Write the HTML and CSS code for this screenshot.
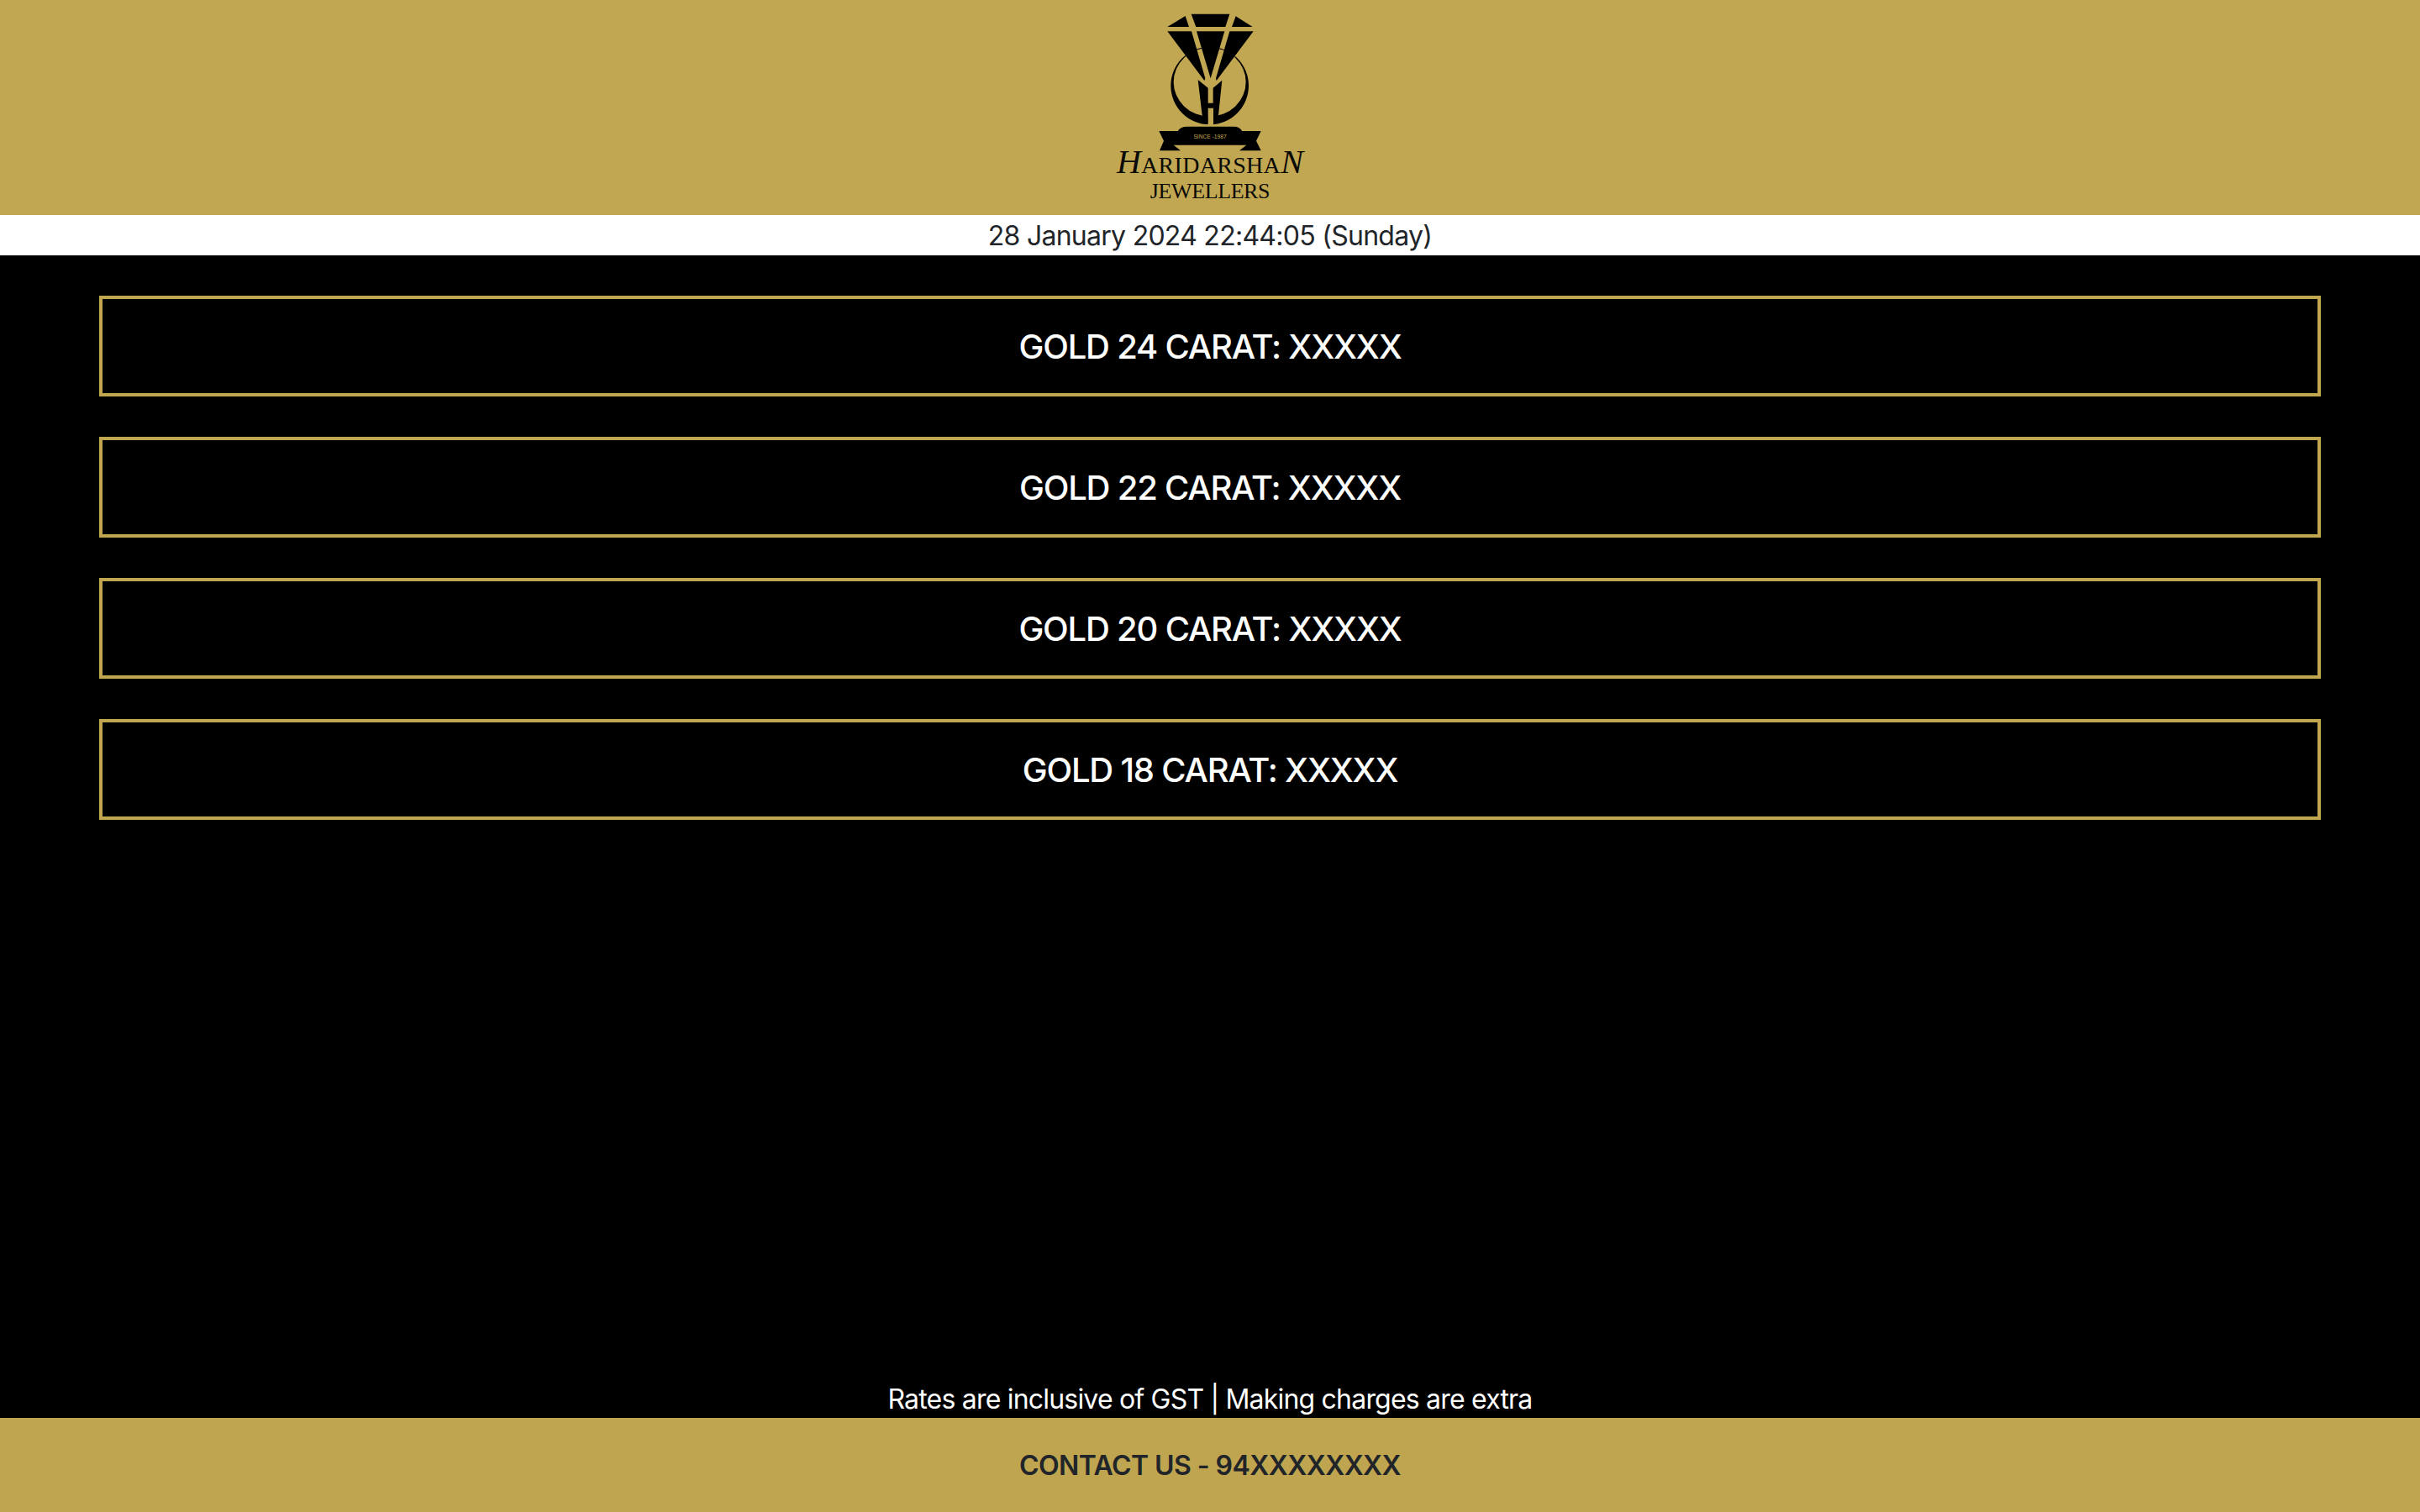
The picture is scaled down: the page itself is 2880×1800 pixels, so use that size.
FILE: index.html
```html
<!DOCTYPE html>
<html lang="en">
<head>
<meta charset="utf-8">
<title>Haridarshan Jewellers</title>
<link rel="stylesheet" href="styles.css">
</head>
<body>
<div class="page">
  <header class="top">
    <svg class="logo" viewBox="0 0 840 540" width="280" height="180" role="img" aria-label="Haridarshan Jewellers logo">
      <path fill-rule="evenodd" d="M280 306A139 139 0 1 0 558 306A139 139 0 1 0 280 306ZM290 293A129 123 0 1 1 548 293A129 123 0 1 1 290 293Z"/>
      <rect class="gap" x="412" y="400" width="20" height="50"/>
      <path class="gap-line" d="M268 112 403 290M575 112 441 290"/>
      <path d="M268 96 332 57 345 96ZM353 50H490L475 96H370ZM512 58 572 96H498ZM268 112H354L403 280 400 288ZM372 112H472L422 280ZM490 112H575L443 288 441 280Z"/>
      <path d="M377 285 413 314V368H431V314L463 287 450 412 432 443V386H413V443L392 412Z"/>
      <path d="M238 468H305Q315 452 338 452H505Q525 452 535 468H602L585 503 602 538H525L550 518H290L315 538H240L255 503Z"/>
      <text class="since" x="420" y="494" text-anchor="middle">SINCE -1987</text>
    </svg>
    <div class="brand">
      <div class="brand-name"><span class="brand-cap">H</span>ARIDARSHA<span class="brand-cap">N</span></div>
      <div class="brand-sub">JEWELLERS</div>
    </div>
  </header>
  <div class="clock">28 January 2024 22:44:05 (Sunday)</div>
  <main class="rates">
    <div class="rate">GOLD 24 CARAT: XXXXX</div>
    <div class="rate">GOLD 22 CARAT: XXXXX</div>
    <div class="rate">GOLD 20 CARAT: XXXXX</div>
    <div class="rate">GOLD 18 CARAT: XXXXX</div>
  </main>
  <p class="note">Rates are inclusive of GST | Making charges are extra</p>
  <footer class="contact">CONTACT US - 94XXXXXXXX</footer>
</div>
</body>
</html>
```
FILE: styles.css
```css
* { box-sizing: border-box; }
html, body { margin: 0; height: 100%; }
body { background: #000; font-family: Inter, "Liberation Sans", sans-serif; }
.page { height: 1800px; display: flex; flex-direction: column; }
.top { height: 256px; background: #c2a752; flex: none; display: flex; flex-direction: column; align-items: center; overflow: hidden; }
.logo { display: block; flex: none; fill: #000; }
.gap { fill: #c2a752; }
.gap-line { fill: none; stroke: #c2a752; stroke-width: 3; }
.since { font: 20px "Liberation Sans", sans-serif; fill: #c2a752; }
.brand { text-align: center; color: #0a0a06; font-family: "Liberation Serif", serif; margin-top: -2px; }
.brand-name { font-size: 28px; line-height: 34px; letter-spacing: 0.3px; white-space: nowrap; }
.brand-cap { font-size: 40px; font-style: italic; line-height: 30px; }
.brand-sub { font-size: 26px; line-height: 28px; letter-spacing: -0.4px; }
.clock { height: 48px; flex: none; background: #fff; color: #212529; text-align: center; font-size: 32px; line-height: 48px; letter-spacing: -0.73px; padding-top: 1px; }
.rates { flex: 1; padding: 48px 118px 0; display: flex; flex-direction: column; gap: 48px; }
.rate { height: 120px; border: 4px solid #c1a650; color: #fff; font-size: 40px; font-weight: 500; letter-spacing: -1.2px; display: flex; align-items: center; justify-content: center; }
.note { margin: 0; color: #fff; text-align: center; font-size: 32px; line-height: 48px; letter-spacing: -0.8px; padding-top: 2px; height: 48px; }
.contact { height: 112px; flex: none; background: #c0a550; color: #212529; font-size: 32px; font-weight: 600; letter-spacing: -0.56px; display: flex; align-items: center; justify-content: center; }
```
